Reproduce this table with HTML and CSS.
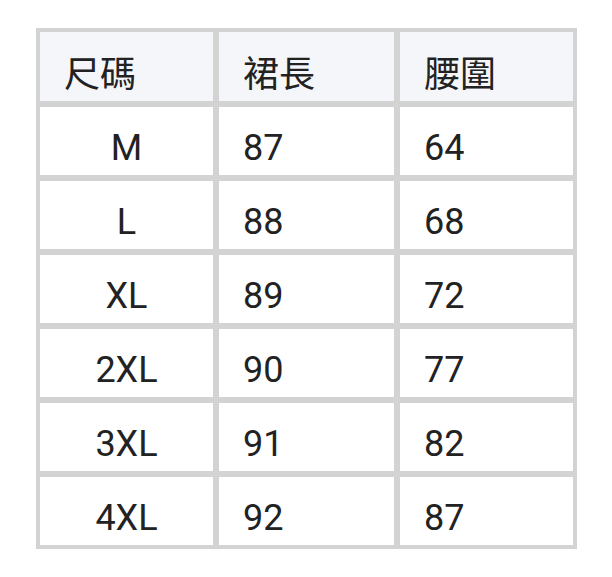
FILE: index.html
```html
<!DOCTYPE html>
<html lang="zh-Hant">
<head>
<meta charset="utf-8">
<link rel="stylesheet" href="styles.css">
</head>
<body>
<div class="wrap">
<table class="size-table">
  <colgroup><col class="c1"><col class="c2"><col class="c3"></colgroup>
  <thead>
    <tr><th>尺碼</th><th>裙長</th><th>腰圍</th></tr>
  </thead>
  <tbody>
    <tr><td class="size">M</td><td>87</td><td>64</td></tr>
    <tr><td class="size">L</td><td>88</td><td>68</td></tr>
    <tr><td class="size">XL</td><td>89</td><td>72</td></tr>
    <tr><td class="size">2XL</td><td>90</td><td>77</td></tr>
    <tr><td class="size">3XL</td><td>91</td><td>82</td></tr>
    <tr><td class="size">4XL</td><td>92</td><td>87</td></tr>
  </tbody>
</table>
</div>
</body>
</html>
```
FILE: styles.css
```css
html, body {
  margin: 0;
  padding: 0;
  background: #ffffff;
}
.wrap {
  padding: 28px 0 0 36px;
}
.size-table {
  table-layout: fixed;
  width: 541px;
  border-collapse: separate;
  border-spacing: 0;
  border: 1px solid #d3d3d3;
  font-family: Roboto, "Noto Sans CJK TC", sans-serif;
  font-size: 36px;
  color: #222222;
}
.c1 { width: 179px; }
.c2 { width: 181px; }
.c3 { width: 179px; }
.size-table th,
.size-table td {
  border: 3px solid #d3d3d3;
  padding: 14px 0 0 24px;
  text-align: left;
  font-weight: normal;
  line-height: 36px;
  vertical-align: middle;
  box-sizing: border-box;
}
.size-table th {
  background: #f5f6fa;
  height: 75px;
  padding-top: 16px;
}
.size-table td {
  height: 74px;
}
.size-table td.size {
  text-align: center;
  padding-left: 0;
}
```
